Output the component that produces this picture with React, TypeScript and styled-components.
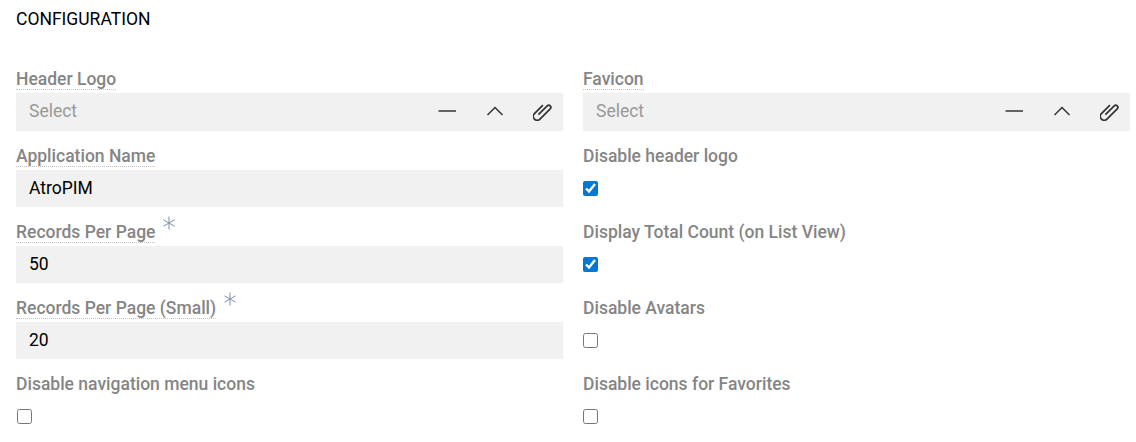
import React from "react";
import styled, { createGlobalStyle } from "styled-components";

const GlobalStyle = createGlobalStyle`
  html, body {
    margin: 0;
    padding: 0;
    background: #fff;
    font-family: Roboto, "Liberation Sans", sans-serif;
  }
`;

const Panel = styled.div`
  width: 1136px;
  height: 442px;
  overflow: hidden;
  padding: 0 6px 0 16px;
  box-sizing: border-box;
`;

const Title = styled.h4`
  margin: 0;
  height: 69px;
  padding-top: 9px;
  box-sizing: border-box;
  font-size: 17.5px;
  line-height: 20px;
  font-weight: 400;
  color: #000;
`;

const Grid = styled.div`
  display: grid;
  grid-template-columns: 547px 547px;
  column-gap: 20px;
  grid-template-rows: 77px;
  grid-auto-rows: 76px;
`;

const Field = styled.div`
  display: flex;
  flex-direction: column;
  align-items: stretch;
`;

const LabelRow = styled.div`
  display: flex;
  align-items: flex-start;
  height: 24px;
  flex: none;
`;

const Label = styled.label<{ $hint?: boolean }>`
  font-size: 17.5px;
  line-height: 20px;
  height: 20px;
  font-weight: 500;
  color: #858585;
  border-bottom: ${(p) => (p.$hint ? "1px dotted #c4c4c4" : "none")};
`;

const Required = styled.svg`
  width: 14px;
  height: 14px;
  margin: -6px 0 0 7px;
  color: #7f93ad;
`;

const InputBox = styled.div<{ $tall?: boolean }>`
  display: flex;
  align-items: center;
  height: ${(p) => (p.$tall ? "38px" : "37px")};
  box-sizing: border-box;
  padding: 0 10px 2px 13px;
  background: #f1f1f1;
  font-size: 17.5px;
  color: #000;
`;

const Placeholder = styled.span`
  flex: 1;
  color: #999;
`;

const ActionRow = styled.div`
  display: flex;
  align-items: center;
  gap: 28px;
  color: #333;
`;

const ActionIcon = styled.svg`
  display: block;
  width: 20px;
  height: 20px;
`;

const Check = styled.input.attrs({ type: "checkbox" })<{ $inset?: boolean }>`
  margin: 11px 0 0 ${(p) => (p.$inset ? "1px" : "0")};
  width: 15px;
  height: 15px;
  accent-color: #0078d4;
`;

const Req = () => (
  <Required viewBox="0 0 14 14" fill="none" stroke="currentColor" strokeWidth="1">
    <path d="M7 0.5V13.5M1.4 3.75L12.6 10.25M12.6 3.75L1.4 10.25" />
  </Required>
);

const Value = ({ label, value, required }: { label: string; value: string; required?: boolean }) => (
  <Field>
    <LabelRow>
      <Label $hint>{label}</Label>
      {required && <Req />}
    </LabelRow>
    <InputBox>{value}</InputBox>
  </Field>
);

const FileSelect = ({ label }: { label: string }) => (
  <Field>
    <LabelRow>
      <Label $hint>{label}</Label>
    </LabelRow>
    <InputBox $tall>
      <Placeholder>Select</Placeholder>
      <ActionRow>
        <ActionIcon viewBox="0 0 20 20" fill="none" stroke="currentColor" strokeWidth="1.5">
          <path d="M1.5 10H19" />
        </ActionIcon>
        <ActionIcon viewBox="0 0 20 20" fill="none" stroke="currentColor" strokeWidth="1.5">
          <path d="M2.5 14L10 6.5L17.5 14" />
        </ActionIcon>
        <ActionIcon viewBox="0 0 20 20" fill="none" stroke="currentColor" strokeWidth="1.7">
          <path
            transform="translate(9.5 10) rotate(45)"
            d="M-0.3 5.5V-7a2.1 2.1 0 0 1 4.2 0V7.5a3.9 3.9 0 0 1-7.8 0V-4.5"
          />
        </ActionIcon>
      </ActionRow>
    </InputBox>
  </Field>
);

const Toggle = ({ label, checked, inset }: { label: string; checked?: boolean; inset?: boolean }) => (
  <Field>
    <LabelRow>
      <Label>{label}</Label>
    </LabelRow>
    <Check defaultChecked={checked} $inset={inset} />
  </Field>
);

export default function App() {
  return (
    <>
      <GlobalStyle />
      <Panel>
        <Title>CONFIGURATION</Title>
        <Grid>
          <FileSelect label="Header Logo" />
          <FileSelect label="Favicon" />
          <Value label="Application Name" value="AtroPIM" />
          <Toggle label="Disable header logo" checked />
          <Value label="Records Per Page" value="50" required />
          <Toggle label="Display Total Count (on List View)" checked />
          <Value label="Records Per Page (Small)" value="20" required />
          <Toggle label="Disable Avatars" />
          <Toggle label="Disable navigation menu icons" inset />
          <Toggle label="Disable icons for Favorites" />
        </Grid>
      </Panel>
    </>
  );
}
